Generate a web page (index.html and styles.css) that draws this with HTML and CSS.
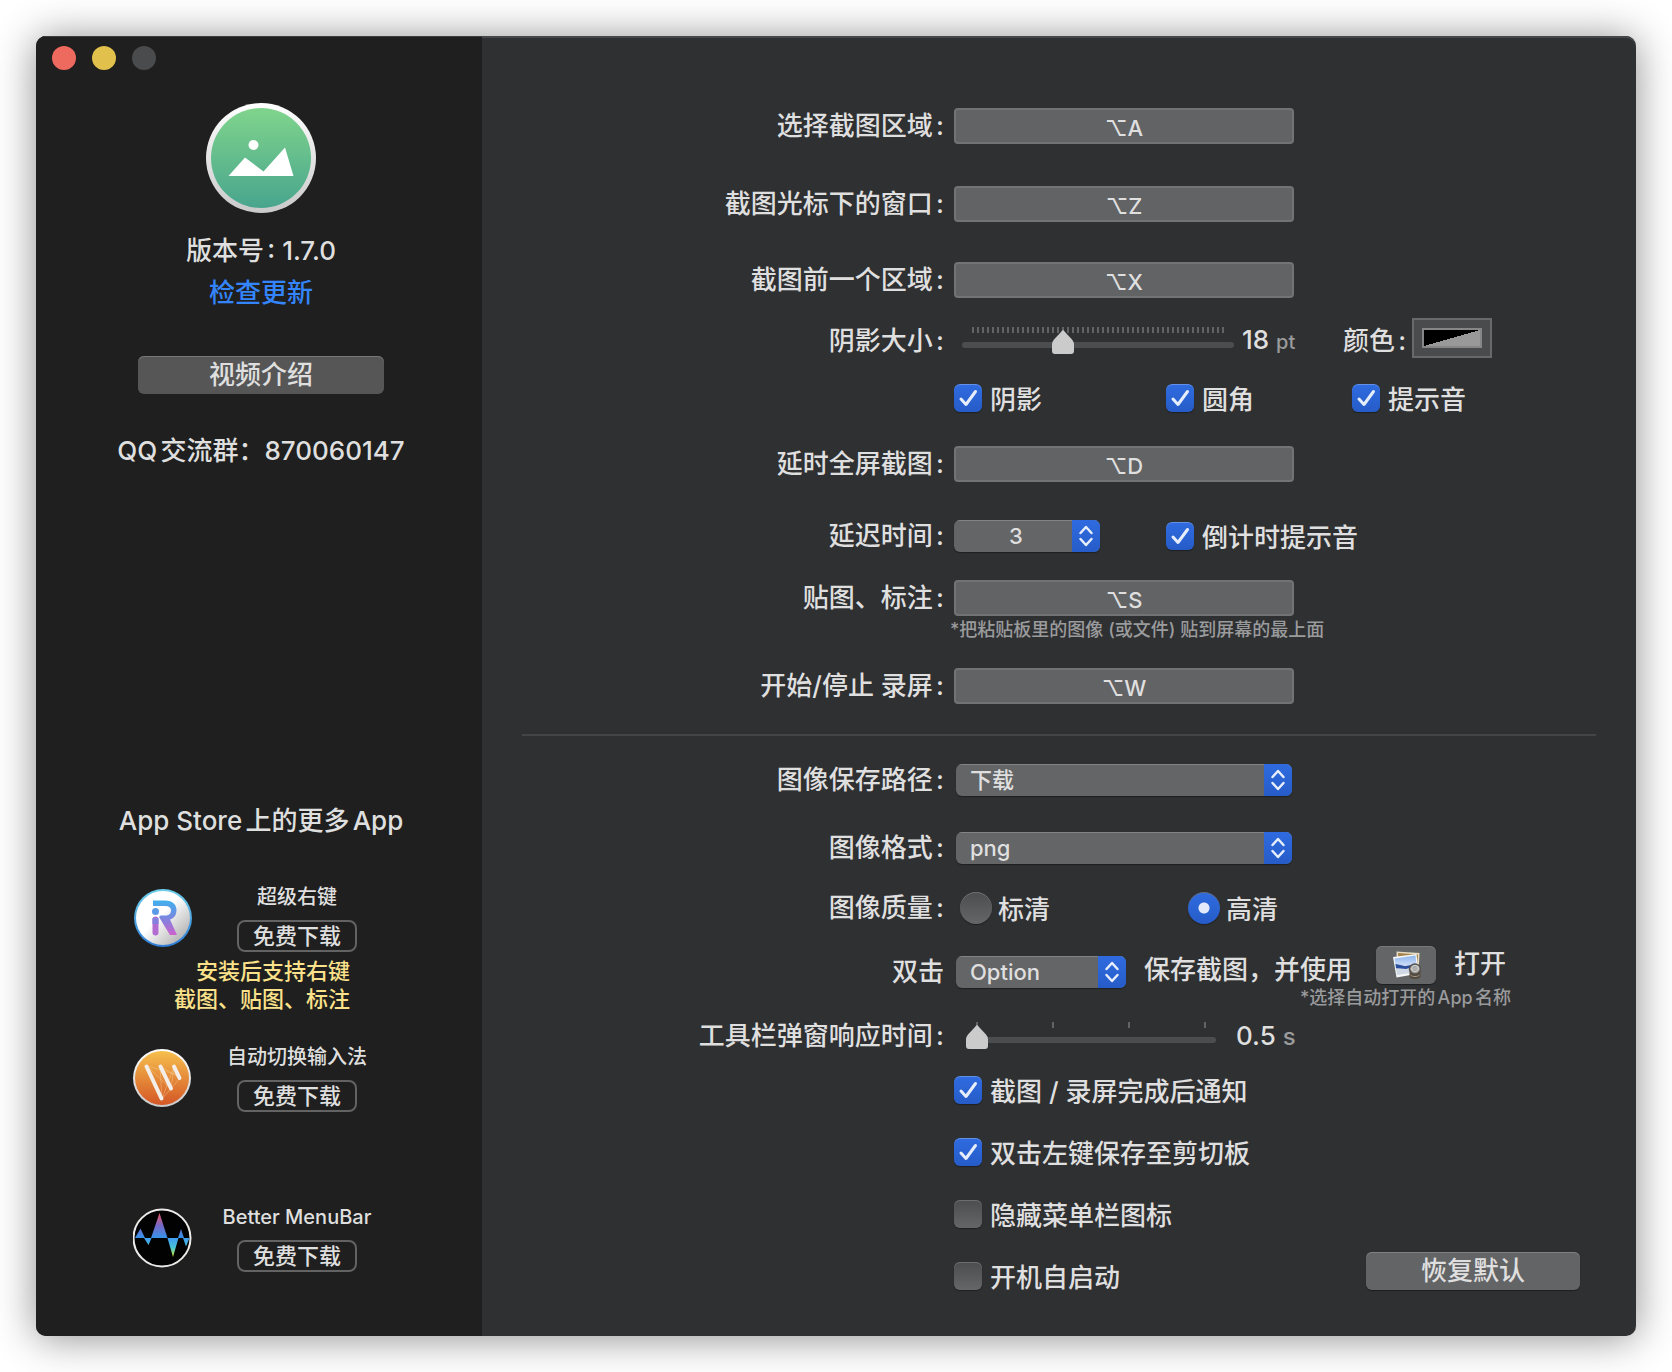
FILE: index.html
```html
<!DOCTYPE html>
<html lang="zh-CN">
<head>
<meta charset="utf-8">
<meta name="viewport" content="width=device-width, initial-scale=1">
<title>截图设置</title>
<link rel="stylesheet" href="styles.css">
</head>
<body>
<div class="window">
  <aside class="sidebar">
    <div class="traffic">
      <button class="light light-close" type="button" aria-label="关闭"></button>
      <button class="light light-min" type="button" aria-label="最小化"></button>
      <button class="light light-zoom" type="button" aria-label="缩放" disabled></button>
    </div>
    <div class="about">
      <svg class="logo" viewBox="0 0 110 110" aria-hidden="true">
        <defs>
          <linearGradient id="rim" x1="0" y1="0" x2="0" y2="1"><stop offset="0" stop-color="#fff"/><stop offset="1" stop-color="#c9c9c9"/></linearGradient>
          <linearGradient id="green" x1="0" y1="0" x2="0" y2="1"><stop offset="0" stop-color="#80d48c"/><stop offset="1" stop-color="#48a58d"/></linearGradient>
        </defs>
        <circle cx="55" cy="55" r="55" fill="url(#rim)"/>
        <circle cx="55" cy="55" r="50" fill="url(#green)"/>
        <circle cx="47.500" cy="42" r="5" fill="#fff"/>
        <path d="M22.500 73 L39 54.500 L57.500 68.500 L79 44.500 L87.500 73 Z" fill="#fff"/>
      </svg>
      <p class="version">版本号: 1.7.0</p>
      <a class="update" href="#update">检查更新</a>
      <button class="push push-video" type="button">视频介绍</button>
      <p class="group">QQ交流群：870060147</p>
    </div>
    <section class="apps">
      <h2 class="apps-title">App Store上的更多App</h2>
      <article class="app">
        <svg class="app-icon" viewBox="0 0 60 60" aria-hidden="true">
          <defs>
            <linearGradient id="r-rim" x1="0" y1="0" x2="0" y2="1"><stop offset="0" stop-color="#6fd0ea"/><stop offset="1" stop-color="#2d7bd6"/></linearGradient>
            <linearGradient id="r-face" x1="0" y1="0" x2="1" y2="1"><stop offset=".45" stop-color="#fff"/><stop offset="1" stop-color="#9f9f9f"/></linearGradient>
            <linearGradient id="r-ink" gradientUnits="userSpaceOnUse" x1="0" y1="12" x2="0" y2="48"><stop offset="0" stop-color="#3fb2ee"/><stop offset=".5" stop-color="#7a86e0"/><stop offset="1" stop-color="#d25fcb"/></linearGradient>
          </defs>
          <circle cx="30" cy="30" r="29" fill="url(#r-rim)"/>
          <circle cx="30" cy="30" r="27" fill="url(#r-face)"/>
          <path d="M20 12.500 H32 C40 12.500 43.500 17 43.500 22 C43.500 27 41 30.500 37 31.500 L44 47 H37 L26 29 L27.500 27.500 H32 C36 27.500 38 25.500 38 22.500 C38 19.500 36 18 32 18 H20 Z" fill="url(#r-ink)"/>
          <path d="M22.500 31.500 V44.500" fill="none" stroke="#b36dd2" stroke-width="6" stroke-linecap="round"/>
          <path d="M19.500 30 H25.500 V36 H19.500 Z" fill="#8480dd"/>
          <circle cx="22.500" cy="23.500" r="3.500" fill="#5c9ae8"/>
        </svg>
        <div class="app-info">
          <h3 class="app-name">超级右键</h3>
          <button class="download" type="button">免费下载</button>
        </div>
        <p class="app-note">安装后支持右键<br>截图、贴图、标注</p>
      </article>
      <article class="app">
        <svg class="app-icon" viewBox="0 0 60 60" aria-hidden="true">
          <defs>
            <linearGradient id="w-face" x1="0" y1="0" x2="0" y2="1"><stop offset="0" stop-color="#f6bf4d"/><stop offset="1" stop-color="#d45726"/></linearGradient>
          </defs>
          <circle cx="29" cy="30" r="29" fill="url(#rim)"/>
          <circle cx="29" cy="30" r="27" fill="url(#w-face)"/>
          <path d="M14 18 L42 26 L47 30 L29 51 L27 18 L38 41 L41 18 L29 51 M14 18 L38 41 M27 18 L47 30" fill="none" stroke="#f7cf9d" stroke-opacity=".4"/>
          <path d="M13.500 18.500 L28.500 50.500 M27.500 18.500 L38 40.500 M41 18.500 L46.500 30" fill="none" stroke="#f3eeea" stroke-width="4" stroke-linecap="round"/>
        </svg>
        <div class="app-info">
          <h3 class="app-name">自动切换输入法</h3>
          <button class="download" type="button">免费下载</button>
        </div>
      </article>
      <article class="app">
        <svg class="app-icon" viewBox="0 0 60 60" aria-hidden="true">
          <defs>
            <linearGradient id="b-up" gradientUnits="userSpaceOnUse" x1="0" y1="5" x2="0" y2="30"><stop offset="0" stop-color="#ee5560"/><stop offset=".5" stop-color="#7568c6"/><stop offset="1" stop-color="#3593ec"/></linearGradient>
            <linearGradient id="b-down" gradientUnits="userSpaceOnUse" x1="0" y1="30" x2="0" y2="49"><stop offset="0" stop-color="#3f9cf4"/><stop offset=".5" stop-color="#48c4d8"/><stop offset="1" stop-color="#d5ee2a"/></linearGradient>
          </defs>
          <circle cx="29" cy="30" r="28.500" fill="#020203" stroke="#ecebe9" stroke-width="2"/>
          <path d="M2 30 L7.500 20.500 L12 30 Z M18 30 L26.500 5 L34.500 30 Z M45 30 L48 21 L51 30 Z" fill="url(#b-up)"/>
          <path d="M11 30 H18.500 L15.500 37 Z M34.500 30 H45.500 L40 49 Z M50 30 H56.500 L53 38.500 Z" fill="url(#b-down)"/>
        </svg>
        <div class="app-info">
          <h3 class="app-name">Better MenuBar</h3>
          <button class="download" type="button">免费下载</button>
        </div>
      </article>
    </section>
  </aside>

  <main class="main">
    <form class="form">
      <div class="row"><label class="label" for="k-area">选择截图区域:</label><input class="key" id="k-area" type="text" value="⌥A" readonly></div>
      <div class="row gap-42"><label class="label" for="k-win">截图光标下的窗口:</label><input class="key" id="k-win" type="text" value="⌥Z" readonly></div>
      <div class="row gap-40"><label class="label" for="k-prev">截图前一个区域:</label><input class="key" id="k-prev" type="text" value="⌥X" readonly></div>

      <div class="row row-shadow gap-20">
        <label class="label" for="shadow-size">阴影大小:</label>
        <div class="controls">
          <input class="slider slider-shadow" id="shadow-size" type="range" min="0" max="50" value="18">
          <output class="value" for="shadow-size">18 <small class="unit">pt</small></output>
          <label class="color-label" for="shadow-color">颜色:</label>
          <button class="well" id="shadow-color" type="button" aria-label="颜色"><span class="swatch"></span></button>
        </div>
      </div>

      <div class="row row-checks gap-20">
        <div class="controls field checks">
          <label class="option"><input class="check" type="checkbox" checked>阴影</label>
          <label class="option"><input class="check" type="checkbox" checked>圆角</label>
          <label class="option"><input class="check" type="checkbox" checked>提示音</label>
        </div>
      </div>

      <div class="row gap-34"><label class="label" for="k-delay">延时全屏截图:</label><input class="key" id="k-delay" type="text" value="⌥D" readonly></div>

      <div class="row row-select gap-38">
        <label class="label" for="delay">延迟时间:</label>
        <div class="controls checks">
          <span class="popup popup-delay">
            <select id="delay"><option>3</option><option>5</option></select>
            <svg class="arrows" viewBox="0 0 28 32" aria-hidden="true"><path d="M8.500 13 L14 7 L19.500 13 M8.500 19 L14 25 L19.500 19"/></svg>
          </span>
          <label class="option"><input class="check" type="checkbox" checked>倒计时提示音</label>
        </div>
      </div>

      <div class="row gap-28"><label class="label" for="k-pin">贴图、标注:</label><input class="key" id="k-pin" type="text" value="⌥S" readonly></div>
      <p class="hint hint-pin">*把粘贴板里的图像 (或文件) 贴到屏幕的最上面</p>
      <div class="row gap-28"><label class="label" for="k-rec">开始/停止 录屏:</label><input class="key" id="k-rec" type="text" value="⌥W" readonly></div>

      <hr class="divider">

      <div class="row row-select">
        <label class="label" for="path">图像保存路径:</label>
        <span class="popup">
          <select id="path"><option>下载</option><option>桌面</option></select>
          <svg class="arrows" viewBox="0 0 28 32" aria-hidden="true"><path d="M8.500 13 L14 7 L19.500 13 M8.500 19 L14 25 L19.500 19"/></svg>
        </span>
      </div>
      <div class="row row-select gap-36">
        <label class="label" for="format">图像格式:</label>
        <span class="popup">
          <select id="format"><option>png</option><option>jpg</option></select>
          <svg class="arrows" viewBox="0 0 28 32" aria-hidden="true"><path d="M8.500 13 L14 7 L19.500 13 M8.500 19 L14 25 L19.500 19"/></svg>
        </span>
      </div>
      <div class="row row-select gap-28" role="radiogroup" aria-labelledby="quality">
        <span class="label" id="quality">图像质量:</span>
        <div class="controls radios">
          <label class="option"><input class="radio" type="radio" name="quality">标清</label>
          <label class="option"><input class="radio" type="radio" name="quality" checked>高清</label>
        </div>
      </div>
      <div class="row row-open gap-22">
        <label class="label" for="modifier">双击</label>
        <div class="controls">
          <span class="popup popup-modifier">
            <select id="modifier"><option>Option</option><option>Command</option></select>
            <svg class="arrows" viewBox="0 0 28 32" aria-hidden="true"><path d="M8.500 13 L14 7 L19.500 13 M8.500 19 L14 25 L19.500 19"/></svg>
          </span>
          <span class="save-text">保存截图，并使用</span>
          <button class="open-app" type="button" aria-label="选择App">
            <svg viewBox="0 0 30 30" aria-hidden="true">
              <defs>
                <linearGradient id="sky" x1="0" y1="0" x2="0" y2="1"><stop offset="0" stop-color="#8db4ee"/><stop offset="1" stop-color="#cfe0f8"/></linearGradient>
              </defs>
              <path d="M5.500 1.500 L28.500 3 L27.500 23 L6 20 Z" fill="#e6dcc4"/>
              <path d="M7 3 L27 4.500 L26.500 18 L8 16 Z" fill="#a5824d"/>
              <path d="M2 7 L25.500 4 L28 23.500 L5.500 27.500 Z" fill="#f6f7f9"/>
              <path d="M3.500 8.500 L24.500 5.500 L25.500 14.500 L4.500 16 Z" fill="url(#sky)"/>
              <path d="M4.500 14 L14 16 L25.500 14 L26 17 L15 19 L5 18.500 Z" fill="#2a4f9c"/>
              <path d="M5 18.500 L15 19 L26 17 L26.500 22 L6 25 Z" fill="#cfd8e4"/>
              <path d="M18.500 20 H29.500 V26 C29.500 30 18.500 30 18.500 26 Z" fill="#54483c"/>
              <ellipse cx="24" cy="19" rx="5.500" ry="5" fill="#a9a8a4" fill-opacity=".85" stroke="#55524e" stroke-width="1.500"/>
              <ellipse cx="24" cy="18.500" rx="3.500" ry="3" fill="none" stroke="#dad9d5"/>
              <path d="M19.500 25 C21 27 27 27 28.500 25" fill="none" stroke="#a39a8c"/>
            </svg>
          </button>
          <span class="open-text">打开</span>
        </div>
      </div>
      <p class="hint hint-open">*选择自动打开的App名称</p>
      <div class="row row-response gap-8">
        <label class="label" for="response">工具栏弹窗响应时间:</label>
        <div class="controls">
          <input class="slider slider-response" id="response" type="range" min="0" max="3" value="0">
          <output class="value" for="response">0.5 <small class="unit">s</small></output>
        </div>
      </div>

      <div class="row row-checks gap-20"><label class="option field"><input class="check" type="checkbox" checked>截图 / 录屏完成后通知</label></div>
      <div class="row row-checks gap-34"><label class="option field"><input class="check" type="checkbox" checked>双击左键保存至剪切板</label></div>
      <div class="row row-checks gap-34"><label class="option field"><input class="check" type="checkbox">隐藏菜单栏图标</label></div>
      <div class="row row-last">
        <label class="option field"><input class="check" type="checkbox">开机自启动</label>
        <button class="push push-reset" type="reset">恢复默认</button>
      </div>
    </form>
  </main>
</div>
</body>
</html>
```
FILE: styles.css
```css
* {
  box-sizing: border-box;
}

body {
  margin: 0;
  padding: 36px;
  background: #fff;
  color: #dfdfdf;
  font: 500 26px/36px Inter, "Noto Sans CJK SC", sans-serif;
  text-autospace: normal;
}

p,
h2,
h3 {
  margin: 0;
  font-weight: 500;
}

button,
input,
select {
  margin: 0;
  border: 0;
  color: inherit;
  font: inherit;
}

.window {
  display: flex;
  min-width: 1400px;
  overflow: hidden;
  border-radius: 10px;
  background: #2f3032;
  box-shadow: 0 2px 40px rgba(0, 0, 0, 0.45), inset 0 2px 0 #45474a;
}

/* Sidebar */

.sidebar {
  display: flex;
  flex: 0 0 446px;
  flex-direction: column;
  padding-bottom: 12px;
  background: #1e1f1e;
  box-shadow: inset 0 1px 0 #3c3e40;
}

.traffic {
  display: flex;
  gap: 16px;
  padding: 10px 16px;
}

.light {
  width: 24px;
  height: 24px;
  padding: 0;
  border-radius: 50%;
}

.light-close { background: #ef6a5e; }
.light-min { background: #e1c04c; }
.light-zoom { background: #4a4b4d; }

.about {
  display: flex;
  flex-direction: column;
  align-items: center;
  padding: 23px 0 0 4px;
}

.logo {
  width: 110px;
  height: 110px;
}

.version {
  margin-top: 20px;
}

.update {
  margin-top: 6px;
  color: #3485fb;
  text-decoration: none;
}

.push {
  height: 38px;
  padding: 0;
  border-radius: 6px;
  background: #636466;
  box-shadow: inset 0 1px 0 #808183, 0 1px 1px #1d1e1f;
}

.push-video {
  width: 246px;
  margin-top: 45px;
  background: #565656;
  box-shadow: inset 0 1px 0 #777;
}

.group {
  margin-top: 39px;
}

.apps {
  display: flex;
  flex-direction: column;
  margin-top: auto;
  padding-left: 4px;
}

.apps-title {
  margin-bottom: 44px;
  font-size: 26px;
  text-align: center;
}

.app {
  display: grid;
  grid-template-columns: 60px 160px;
  align-content: start;
  align-self: center;
  column-gap: 24px;
  width: 256px;
  min-height: 160px;
}

.app:last-child {
  min-height: 121px;
}

.app-icon {
  width: 60px;
  height: 60px;
  margin-top: 5px;
}

.app-info {
  display: flex;
  flex-direction: column;
  align-items: center;
  gap: 9px;
}

.app-name {
  font-size: 20px;
  line-height: 28px;
  white-space: nowrap;
}

.download {
  width: 120px;
  height: 32px;
  padding: 0;
  border: 2px solid #626362;
  border-radius: 8px;
  background: none;
  font-size: 22px;
  line-height: 28px;
}

.app-note {
  grid-column: 1 / -1;
  margin-top: 5px;
  padding-right: 27px;
  color: #fbe18a;
  font-size: 22px;
  line-height: 28px;
  text-align: right;
}

/* Settings form */

.main {
  flex: 1;
  padding: 72px 40px 46px;
}

.row {
  display: grid;
  grid-template-columns: 422px 1fr;
  align-items: center;
  column-gap: 10px;
  min-height: 36px;
}

.gap-8 { margin-top: 8px; }
.gap-20 { margin-top: 20px; }
.gap-22 { margin-top: 22px; }
.gap-28 { margin-top: 28px; }
.gap-34 { margin-top: 34px; }
.gap-36 { margin-top: 36px; }
.gap-38 { margin-top: 38px; }
.gap-40 { margin-top: 40px; }
.gap-42 { margin-top: 42px; }

.label {
  line-height: 32px;
  text-align: right;
  white-space: nowrap;
}

.controls {
  display: flex;
  align-items: center;
}

.field {
  grid-column: 2;
}

.key {
  width: 340px;
  height: 36px;
  padding: 3px 0 0;
  border: 2px solid #727375;
  border-radius: 4px;
  background: #626365;
  font-size: 22px;
  text-align: center;
}

.hint {
  color: #9a9b9c;
  font-size: 18px;
  line-height: 20px;
}

.hint-pin {
  margin: 4px 0 0 428px;
}

.hint-open {
  margin-left: 778px;
}

.divider {
  height: 2px;
  margin: 30px 0 28px;
  border: 0;
  background: #444547;
}

/* Sliders */

.slider {
  height: 28px;
  padding-top: 8px;
  appearance: none;
  background-color: transparent;
  background-repeat: no-repeat;
}

.slider::-webkit-slider-runnable-track {
  height: 6px;
  border-radius: 3px;
  background: #4c4d4f;
}

.slider::-webkit-slider-thumb {
  width: 22px;
  height: 24px;
  margin-top: -12px;
  appearance: none;
  background: url("data:image/svg+xml,%3Csvg xmlns='http://www.w3.org/2000/svg' viewBox='0 0 22 24'%3E%3Cpath d='M11 0 Q12 .5 13 2 L20 9.500 Q22 12 22 14 V21 Q22 24 19 24 H3 Q0 24 0 21 V14 Q0 12 2 9.500 L9 2 Q10 .5 11 0 Z' fill='%23cbcbcb'/%3E%3C/svg%3E");
}

.slider-shadow {
  width: 272px;
  margin-left: 8px;
  background-image: repeating-linear-gradient(90deg, #626365 0 2px, transparent 2px 5px);
  background-position: 10px 0;
  background-size: 252px 6px;
}

.slider-response {
  width: 250px;
  margin-left: 12px;
  background-image: repeating-linear-gradient(90deg, #626365 0 2px, transparent 2px 76px);
  background-position: 10px 0;
  background-size: 230px 6px;
}

.value {
  width: 101px;
  margin-left: 8px;
  white-space: nowrap;
}

.slider-response + .value {
  margin-left: 20px;
}

.unit {
  color: #9a9b9c;
  font-size: 20px;
}

.slider-response + .value .unit {
  font-size: 24px;
}

.row-shadow {
  min-height: 46px;
}

.row-shadow .controls {
  height: 46px;
}

.row-response {
  min-height: 40px;
}

.color-label {
  width: 69px;
}

.well {
  align-self: flex-start;
  width: 80px;
  height: 40px;
  padding: 8px;
  border: 2px solid #68696b;
  background: #4a4b4d;
}

.swatch {
  display: block;
  height: 20px;
  border: 2px solid #878787;
  background: linear-gradient(to bottom right, #000 50%, #999 50%);
}

/* Tick boxes and radios */

.row-checks {
  min-height: 28px;
}

.checks .option:nth-child(1) { width: 212px; }
.checks .option:nth-child(2) { width: 186px; }

.option {
  display: flex;
  align-items: flex-start;
  gap: 8px;
  height: 28px;
  line-height: 32px;
  white-space: nowrap;
}

.check,
.radio {
  flex: none;
  appearance: none;
  background: linear-gradient(#4c4d4e, #656667);
  box-shadow: inset 0 1px 0 #6d6e70, 0 1px 1px #1f2021;
}

.check {
  width: 28px;
  height: 28px;
  border-radius: 6px;
}

.check:checked {
  background:
    url("data:image/svg+xml,%3Csvg xmlns='http://www.w3.org/2000/svg' viewBox='0 0 28 28'%3E%3Cpath d='M7 15 L12 20.500 L21.500 7.500' fill='none' stroke='%23e6edfb' stroke-width='3' stroke-linecap='round' stroke-linejoin='round'/%3E%3C/svg%3E"),
    linear-gradient(#2f6be0, #265cc8);
  box-shadow: inset 0 1px 0 #6491e8, 0 1px 1px #1f2021;
}

.radio {
  width: 32px;
  height: 32px;
  border-radius: 50%;
}

.radio:checked {
  background:
    radial-gradient(circle, #e3ebfb 5px, transparent 6px),
    linear-gradient(#2f6be0, #265cc8);
}

.radios {
  padding-left: 6px;
}

.radios .option {
  gap: 6px;
  width: 228px;
  height: 32px;
  line-height: 36px;
}

/* Pop-up menus */

.row-select {
  min-height: 32px;
}

.popup {
  display: grid;
  width: 336px;
  height: 32px;
  margin-left: 2px;
  overflow: hidden;
  border-radius: 6px;
  background: #646567;
  box-shadow: 0 1px 1px #1f2021;
}

.popup select {
  grid-area: 1 / 1;
  height: 32px;
  padding: 0 28px 0 14px;
  appearance: none;
  background: none;
  box-shadow: inset 0 1px 0 #828385;
  font-size: 22px;
  line-height: 32px;
}

.arrows {
  grid-area: 1 / 1;
  justify-self: end;
  width: 28px;
  height: 32px;
  background: linear-gradient(#2f6be0, #265cc8);
  fill: none;
  stroke: #e6edfb;
  stroke-width: 2.5;
  stroke-linecap: round;
  stroke-linejoin: round;
  pointer-events: none;
}

.popup-delay {
  width: 146px;
  margin: 0 66px 0 0;
}

.popup-delay select {
  padding-left: 6px;
  text-align: center;
  text-align-last: center;
}

.popup-modifier {
  width: 170px;
}

/* Open-with row: menu and sentence sit low, the app button sits high */

.row-open {
  align-items: end;
  min-height: 42px;
}

.row-open .controls {
  align-items: flex-end;
  height: 42px;
}

.save-text {
  width: 232px;
  margin-left: 18px;
  white-space: nowrap;
}

.open-app,
.open-text {
  align-self: flex-start;
}

.open-app {
  display: grid;
  place-items: center;
  width: 60px;
  height: 38px;
  padding: 0;
  border-radius: 6px;
  background: #646567;
  box-shadow: inset 0 1px 0 #77787a, 0 1px 1px #1f2021;
}

.open-app svg {
  width: 30px;
  height: 30px;
}

.open-text {
  margin-left: 18px;
}

.row-last {
  grid-template-columns: 422px 1fr 214px;
  align-items: end;
  margin-top: 24px;
  padding-right: 16px;
}
```
